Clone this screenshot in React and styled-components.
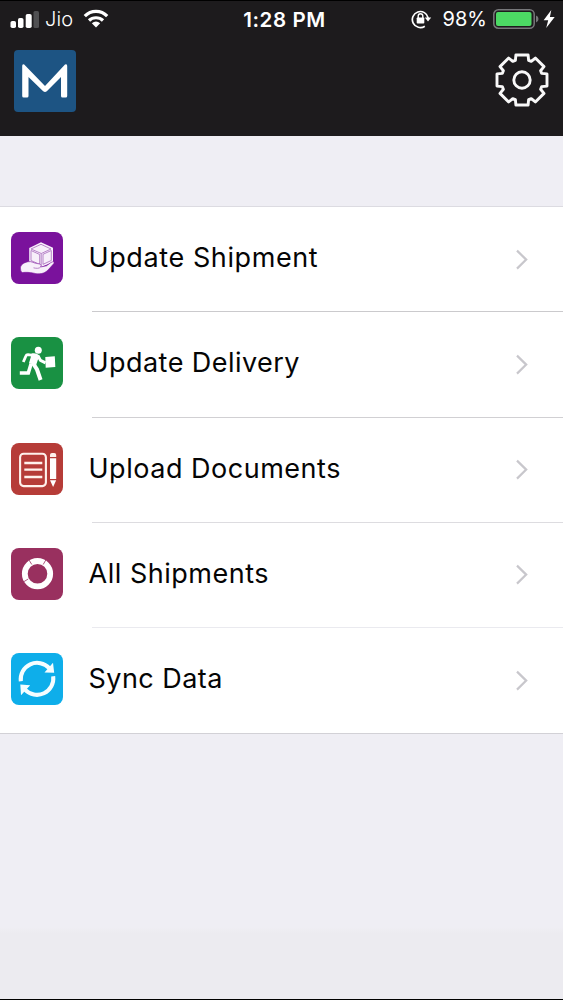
import React from 'react';
import styled, { createGlobalStyle } from 'styled-components';

const GlobalStyle = createGlobalStyle`
  body {
    margin: 0;
    background: #efeef4;
    font-family: Inter, "Liberation Sans", sans-serif;
  }
`;

const Screen = styled.div`
  box-sizing: border-box;
  display: flex;
  flex-direction: column;
  width: 563px;
  height: 1000px;
  overflow: hidden;
  border-top: 1px solid #000000;
  border-bottom: 1px solid #000000;
  background: linear-gradient(#efeef4 926px, #ecebf0 932px);
`;

const Header = styled.header`
  box-sizing: border-box;
  height: 135px;
  background: #1d1b1d;
  color: #ffffff;
`;

const StatusBar = styled.div`
  display: grid;
  grid-template-columns: 1fr auto 1fr;
  align-items: center;
  height: 35px;
  padding: 0 8px 0 10px;
`;

const StatusGroup = styled.div`
  display: flex;
  align-items: center;
  justify-content: ${(props) => (props.$end ? 'flex-end' : 'flex-start')};
  font-size: 20px;
  letter-spacing: ${(props) => (props.$end ? '0' : '0.1px')};
  font-weight: ${(props) => (props.$end ? 400 : 300)};

  svg {
    display: block;
    flex: none;
  }
`;

const StatusText = styled.span`
  margin: ${(props) => props.$margin};
`;

const Time = styled.div`
  font-size: 20.5px;
  font-weight: 600;
  letter-spacing: 0.6px;
  padding: 1px 0 0 4px;
`;

const NavBar = styled.div`
  display: flex;
  justify-content: space-between;
  align-items: flex-start;
  padding: 14px 14px 0 14px;
`;

const Logo = styled.div`
  width: 62px;
  height: 62px;
  border-radius: 4px;
  background: #1d5483;
`;

const SettingsButton = styled.button`
  border: none;
  background: none;
  padding: 3px 0 0;
  line-height: 0;
  cursor: pointer;
`;

const Menu = styled.ul`
  list-style: none;
  margin: 70px 0 0;
  padding: 0;
  background: #ffffff;
  border-top: 1px solid #dcdbe1;
  border-bottom: 1px solid #d2d1d6;
`;

const MenuItem = styled.li`
  display: flex;
  align-items: center;
  height: 105.28px;
  cursor: pointer;
`;

const IconTile = styled.div`
  flex: none;
  width: 52px;
  height: 52px;
  margin: 0 29px 3px 11px;
  border-radius: 8px;
  background: ${(props) => props.$color};

  svg {
    display: block;
  }
`;

const ItemBody = styled.div`
  box-sizing: border-box;
  flex: 1;
  display: flex;
  align-items: center;
  justify-content: space-between;
  height: 100%;
  padding: 0 34px 0 0;
  background: linear-gradient(${(props) => props.$line}, ${(props) => props.$line})
    no-repeat 0 100% / 100% 1px;
`;

const Label = styled.span`
  margin: 0 0 3px -3.5px;
  color: #050505;
  font-size: 27px;
  line-height: 36px;
  letter-spacing: ${(props) => props.$spacing}px;
`;

const SignalIcon = () => (
  <svg width="30" height="18" viewBox="0 0 30 18" fill="#fff">
    <rect x="0.5" y="11" width="5.5" height="7" rx="1.8" />
    <rect x="8" y="8" width="5.5" height="10" rx="1.8" />
    <rect x="15.7" y="4" width="6" height="14" rx="1.8" />
    <rect x="23.5" y="1" width="5.5" height="17" rx="1.5" fill="#505052" />
  </svg>
);

const WifiIcon = () => (
  <svg width="26" height="19" viewBox="0 0 26 19" fill="none" stroke="#fff" strokeWidth="3.2">
    <path d="M1.8 7.2C8 .7 18 .7 24.2 7.2" />
    <path d="M6 11.5C9.8 7.8 16.2 7.8 20 11.5" />
    <path d="M8.8 14.3Q13 10.8 17.2 14.3L13 18.4Z" fill="#fff" stroke="none" />
  </svg>
);

const RotationLockIcon = () => (
  <svg width="21" height="20" viewBox="0 0 21 20" fill="none" stroke="#fff" strokeWidth="1.7">
    <path d="M13.8 17.2A8 8 0 1 1 17.2 9" />
    <path d="M13.8 8.6H20.2L17 12.6Z" fill="#fff" stroke="none" />
    <rect x="5.7" y="8.5" width="7.6" height="6" rx="0.8" fill="#fff" stroke="none" />
    <path d="M7.2 9V7a2.3 2.3 0 0 1 4.6 0V9" strokeWidth="1.4" />
  </svg>
);

const BatteryIcon = () => (
  <svg width="46" height="20" viewBox="0 0 46 20">
    <rect x="0.8" y="0.8" width="40.4" height="18.4" rx="4.5" fill="none" stroke="#77777a" strokeWidth="1.5" />
    <rect x="3" y="3" width="35.5" height="14" rx="2" fill="#4cd964" />
    <path d="M43 6.5Q45.5 7.2 45.5 10T43 13.5Z" fill="#77777a" />
  </svg>
);

const BoltIcon = () => (
  <svg width="12" height="18" viewBox="0 0 12 18" fill="#fff">
    <path d="M8.3 0 0.6 10.3H5.2L3.2 18 11.7 7H6.9Z" />
  </svg>
);

const LogoMark = () => (
  <svg width="62" height="62" viewBox="0 0 62 62" fill="#fff">
    <path d="M8.2 16Q8.2 13.5 10.2 14.5L31 36 51 14.5Q53.2 13.5 53.2 16V46Q53.2 47.5 51.7 47.5H48.5Q47 47.5 47 46V27L32.8 41.2Q31 42.8 29.2 41.2L14.5 27V46Q14.5 47.5 13 47.5H9.7Q8.2 47.5 8.2 46Z" />
  </svg>
);

// One tooth, repeated every 45 degrees around the hub
const TOOTH = [[-6.6, -19.7], [-6.1, -25], [6.1, -25], [6.6, -19.7]];

const gearPoints = Array.from({ length: 8 })
  .flatMap((_, i) => {
    const a = (i * Math.PI) / 4;
    return TOOTH.map(([x, y]) => [
      27 + x * Math.cos(a) - y * Math.sin(a),
      27 + x * Math.sin(a) + y * Math.cos(a),
    ].map((n) => n.toFixed(2)).join(','));
  })
  .join(' ');

const GearIcon = () => (
  <svg width="54" height="54" viewBox="0 0 54 54" fill="none" stroke="#f8f8f8" strokeWidth="2.9" strokeLinejoin="round">
    <polygon points={gearPoints} />
    <circle cx="27" cy="27" r="8.2" />
  </svg>
);

const ShipmentIcon = () => (
  <svg width="52" height="52" viewBox="0 0 52 52" fill="#f7effa">
    <path d="M30 10.2 42 15.8V30L30.2 35 18.2 29.5V16Z" />
    <path
      d="M20 17 30 12.3 40 17 30.3 21.5ZM30.2 21.5V33.5M20 18.5V28.5L28.7 32.4V22.5ZM40.3 18.5V28.5L32 32.3V22.3Z"
      fill="none"
      stroke="#a76abc"
      strokeWidth="0.8"
    />
    <path
      d="M9.5 36.5C9 33 13 30.5 17 29.7C21 29 22.5 31.2 26.5 31.6C29.5 32 31 33 29.5 35L35.5 33.8L40 30.5C42 29.2 43.8 29.8 42.8 31.6L37 38C33 42 28 42.5 23 41.2C18 40.2 15.5 40.2 11.5 40.5Q9.3 40 9.5 36.5Z"
      stroke="#7a129c"
      strokeWidth="0.6"
    />
    <path d="M22.5 35.8C25 36.5 28.5 36.7 29.5 35" fill="none" stroke="#a76abc" strokeWidth="0.8" />
  </svg>
);

const DeliveryIcon = () => (
  <svg width="52" height="52" viewBox="0 0 52 52" fill="none" stroke="#fff">
    <circle cx="27.3" cy="13.2" r="3.5" fill="#fff" stroke="none" />
    <path d="M12.3 25 15 18.8Q15.4 17.7 17 17.6L22 18.3" strokeWidth="2.8" />
    <path d="M20.5 16.5C24 15.8 27 16.5 28.2 19L25.7 26.2 25 28.5 18 26 20 19.5Z" fill="#fff" stroke="none" />
    <path d="M26.8 18.5 29.5 23.4 34.5 25.8" strokeWidth="3" />
    <path d="M20.2 26.5 17.3 36H8.8" strokeWidth="3.6" />
    <path d="M21.8 26 26 32.5 29.6 43" strokeWidth="4" />
    <path d="M34.3 20 43.8 19.2 44.3 30 34.7 30.7Z" fill="#fff" stroke="none" />
  </svg>
);

const DocumentsIcon = () => (
  <svg width="52" height="52" viewBox="0 0 52 52" fill="none" stroke="#fff1ec">
    <rect x="9.1" y="10.7" width="25.8" height="32.4" rx="3.5" strokeWidth="2.1" />
    <path d="M13.3 20H31.3M13.3 26.7H31.3M13.3 34H31.3" strokeWidth="2.3" />
    <path d="M39 14V12Q39 10 41 10H43.2Q45.2 10 45.2 12V14Z" fill="#fff1ec" stroke="none" />
    <path d="M39 15.2H45.2V36H39ZM39 37.3H45.2L42.1 44Z" fill="#fff" stroke="none" />
  </svg>
);

const AllShipmentsIcon = () => (
  <svg width="52" height="52" viewBox="0 0 52 52" fill="none">
    <circle cx="26.5" cy="25.7" r="12.7" stroke="#fff" strokeWidth="5.8" />
    <path d="M20.8 16.5 17.8 11.7M32.2 16.5 35 11.7M17.2 31 12.3 34" stroke="#99305f" strokeWidth="0.8" />
  </svg>
);

const SyncIcon = () => (
  <svg width="52" height="52" viewBox="0 0 52 52" fill="none" stroke="#f5fdff" strokeWidth="4">
    <path d="M9.8 28.2A16.4 16.4 0 0 1 38.2 15.2" />
    <path d="M42.2 23.3A16.4 16.4 0 0 1 14 36.7" />
    <path d="M42 9.8 43.2 19.8 33.5 19.6ZM9.3 31.4 19.2 32.3 10 42.2Z" fill="#f5fdff" stroke="none" />
  </svg>
);

const Chevron = () => (
  <svg width="14" height="22" viewBox="0 0 14 22" fill="none" stroke="#c8c7cc" strokeWidth="2.2">
    <path d="M2 1.6 11.2 10.6 2 19.6" />
  </svg>
);

const items = [
  { label: 'Update Shipment', color: '#7a129c', icon: <ShipmentIcon />, line: '#cbcacd', spacing: 0.6 },
  { label: 'Update Delivery', color: '#199143', icon: <DeliveryIcon />, line: '#d1d0d3', spacing: 0.45 },
  { label: 'Upload Documents', color: '#b63c38', icon: <DocumentsIcon />, line: '#dddce0', spacing: 0.52 },
  { label: 'All Shipments', color: '#99305f', icon: <AllShipmentsIcon />, line: '#eaeaef', spacing: 0.52 },
  { label: 'Sync Data', color: '#0eaeea', icon: <SyncIcon />, line: 'transparent', spacing: 0.45 },
];

const App = () => {
  return (
    <Screen>
      <GlobalStyle />
      <Header>
        <StatusBar>
          <StatusGroup>
            <SignalIcon />
            <StatusText $margin="0 10px 0 5px">Jio</StatusText>
            <WifiIcon />
          </StatusGroup>
          <Time>1:28 PM</Time>
          <StatusGroup $end>
            <RotationLockIcon />
            <StatusText $margin="0 6px 0 11px">98%</StatusText>
            <BatteryIcon />
            <StatusText $margin="0 0 0 4px"><BoltIcon /></StatusText>
          </StatusGroup>
        </StatusBar>
        <NavBar>
          <Logo><LogoMark /></Logo>
          <SettingsButton aria-label="Settings"><GearIcon /></SettingsButton>
        </NavBar>
      </Header>
      <Menu>
        {items.map((item) => (
          <MenuItem key={item.label}>
            <IconTile $color={item.color}>{item.icon}</IconTile>
            <ItemBody $line={item.line}>
              <Label $spacing={item.spacing}>{item.label}</Label>
              <Chevron />
            </ItemBody>
          </MenuItem>
        ))}
      </Menu>
    </Screen>
  );
};

export default App;
